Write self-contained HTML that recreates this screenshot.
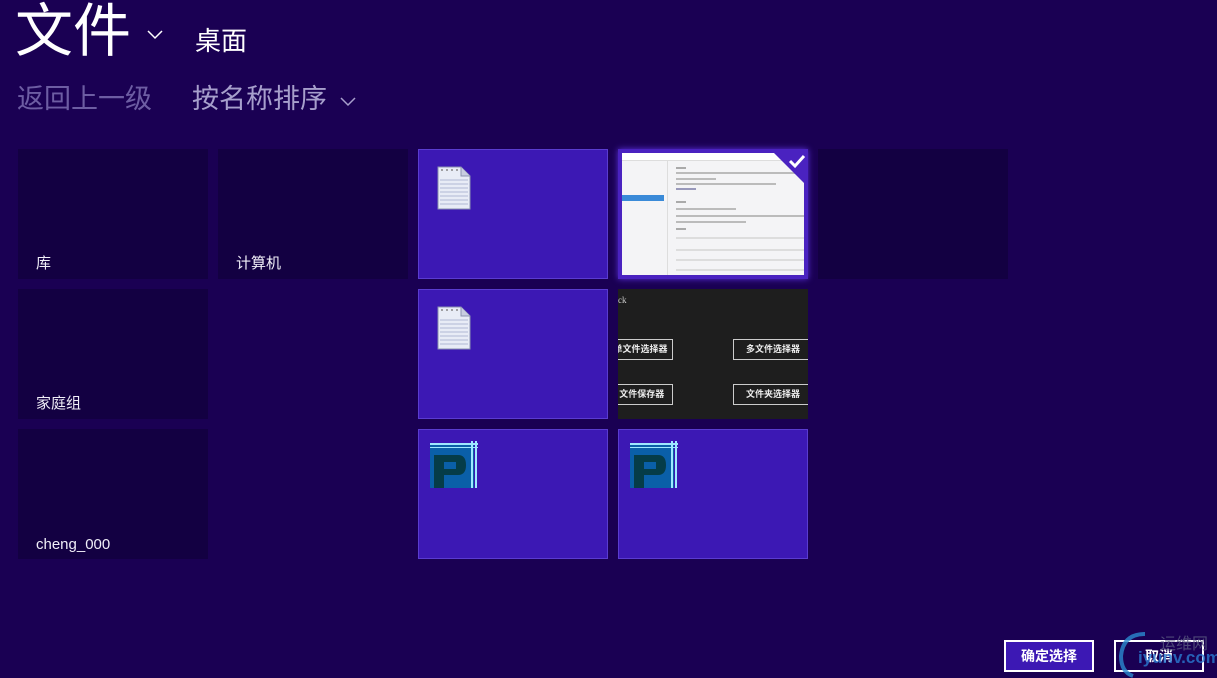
<!DOCTYPE html>
<html><head><meta charset="utf-8"><style>
*{margin:0;padding:0;box-sizing:border-box}
body{width:1217px;height:678px;background:#1a0053;position:relative;overflow:hidden;font-family:"Liberation Sans","Noto Sans CJK SC",sans-serif;color:#fff}
.a{position:absolute}
.t{position:absolute;width:190px;height:130px}
.d{background:#130042}
.p{background:#3c18b4;border:1px solid #5a3cd0}
.lbl{position:absolute;left:18px;bottom:6px;font-size:15px;color:#f0eef8}
.doc{position:absolute;left:18px;top:16px;width:34px;height:44px}
.pi{position:absolute;left:11px;top:11px;width:48px;height:47px}
.btn{position:absolute;border:1px solid #ccc;color:#eee;font-size:9px;font-weight:bold;text-align:center;line-height:19px;height:21px}
.ln{position:absolute;height:2px;background:#ddd;left:54px}
</style></head><body>
<div class="a" style="left:15px;top:-3px;font-size:58px;line-height:70px">文件</div>
<svg class="a" style="left:147px;top:29px" width="16" height="11"><path d="M1 2 L8 9 L15 2" stroke="#fff" stroke-width="1.5" fill="none"/></svg>
<div class="a" style="left:195px;top:25px;font-size:26px;line-height:32px">桌面</div>
<div class="a" style="left:17px;top:82px;font-size:27px;line-height:34px;color:#6d5da3">返回上一级</div>
<div class="a" style="left:192px;top:82px;font-size:27px;line-height:34px;color:#a79fcc">按名称排序</div>
<svg class="a" style="left:340px;top:96px" width="16" height="11"><path d="M1 2 L8 9 L15 2" stroke="#a79fcc" stroke-width="1.5" fill="none"/></svg>

<div class="t d" style="left:18px;top:149px"><div class="lbl">库</div></div>
<div class="t d" style="left:218px;top:149px"><div class="lbl">计算机</div></div>
<div class="t d" style="left:18px;top:289px"><div class="lbl">家庭组</div></div>
<div class="t d" style="left:18px;top:429px"><div class="lbl">cheng_000</div></div>
<div class="t d" style="left:818px;top:149px"></div>

<div class="t p" style="left:418px;top:149px"><svg class="doc" viewBox="0 0 34 44"><path d="M1 1 H24 L33 10 V43 H1 Z" fill="#e8ecf6" stroke="#8a92b0"/><path d="M24 1 V10 H33" fill="#c8cde0" stroke="#8a92b0"/><g stroke="#b0b8d4"><line x1="3" y1="14" x2="31" y2="14"/><line x1="3" y1="18" x2="31" y2="18"/><line x1="3" y1="22" x2="31" y2="22"/><line x1="3" y1="26" x2="31" y2="26"/><line x1="3" y1="30" x2="31" y2="30"/><line x1="3" y1="34" x2="31" y2="34"/><line x1="3" y1="38" x2="31" y2="38"/></g><g fill="#888"><circle cx="5" cy="4" r="1"/><circle cx="10" cy="4" r="1"/><circle cx="15" cy="4" r="1"/><circle cx="20" cy="4" r="1"/></g></svg></div>
<div class="t p" style="left:418px;top:289px"><svg class="doc" viewBox="0 0 34 44"><path d="M1 1 H24 L33 10 V43 H1 Z" fill="#e8ecf6" stroke="#8a92b0"/><path d="M24 1 V10 H33" fill="#c8cde0" stroke="#8a92b0"/><g stroke="#b0b8d4"><line x1="3" y1="14" x2="31" y2="14"/><line x1="3" y1="18" x2="31" y2="18"/><line x1="3" y1="22" x2="31" y2="22"/><line x1="3" y1="26" x2="31" y2="26"/><line x1="3" y1="30" x2="31" y2="30"/><line x1="3" y1="34" x2="31" y2="34"/><line x1="3" y1="38" x2="31" y2="38"/></g><g fill="#888"><circle cx="5" cy="4" r="1"/><circle cx="10" cy="4" r="1"/><circle cx="15" cy="4" r="1"/><circle cx="20" cy="4" r="1"/></g></svg></div>
<div class="t p" style="left:418px;top:429px"><svg class="pi" viewBox="0 0 48 47"><rect x="0" y="4" width="44" height="43" fill="#0a5fa8"/><path d="M4 14 H28 Q36 14 36 24 Q36 34 28 34 H14 V47 H4 Z M14 21 V28 H26 V21 Z" fill="#053c48"/><rect x="0" y="2" width="48" height="2" fill="#9ee8ff"/><rect x="0" y="6" width="48" height="1" fill="#9ee8ff"/><rect x="41" y="0" width="2" height="47" fill="#9ee8ff"/><rect x="45" y="0" width="2" height="47" fill="#9ee8ff"/></svg></div>
<div class="t p" style="left:618px;top:429px"><svg class="pi" viewBox="0 0 48 47"><rect x="0" y="4" width="44" height="43" fill="#0a5fa8"/><path d="M4 14 H28 Q36 14 36 24 Q36 34 28 34 H14 V47 H4 Z M14 21 V28 H26 V21 Z" fill="#053c48"/><rect x="0" y="2" width="48" height="2" fill="#9ee8ff"/><rect x="0" y="6" width="48" height="1" fill="#9ee8ff"/><rect x="41" y="0" width="2" height="47" fill="#9ee8ff"/><rect x="45" y="0" width="2" height="47" fill="#9ee8ff"/></svg></div>

<div class="t" style="left:618px;top:149px;background:#4a22c0;box-shadow:0 0 6px #5a30d8">
 <div class="a" style="left:4px;top:4px;width:182px;height:122px;background:#f4f4f6;overflow:hidden">
  <div class="a" style="left:0;top:0;width:182px;height:8px;background:#fff;border-bottom:1px solid #ddd"></div>
  <div class="a" style="left:0;top:42px;width:42px;height:6px;background:#3a8ad8"></div>
  <div class="a" style="left:45px;top:8px;width:1px;height:114px;background:#ddd"></div>
  <div class="ln" style="top:14px;width:10px;background:#aaa"></div>
  <div class="ln" style="top:19px;width:128px;background:#bbb"></div>
  <div class="ln" style="top:25px;width:40px;background:#bbb"></div>
  <div class="ln" style="top:30px;width:100px;background:#bbb"></div>
  <div class="ln" style="top:35px;width:20px;background:#99b"></div>
  <div class="ln" style="top:48px;width:10px;background:#aaa"></div>
  <div class="ln" style="top:55px;width:60px;background:#bbb"></div>
  <div class="ln" style="top:62px;width:128px;background:#bbb"></div>
  <div class="ln" style="top:68px;width:70px;background:#bbb"></div>
  <div class="ln" style="top:75px;width:10px;background:#aaa"></div>
  <div class="ln" style="top:84px;width:128px;background:#ddd"></div>
  <div class="ln" style="top:96px;width:128px;background:#ddd"></div>
  <div class="ln" style="top:106px;width:128px;background:#ddd"></div>
  <div class="ln" style="top:116px;width:128px;background:#ddd"></div>
 </div>
 <svg class="a" style="left:152px;top:0" width="38" height="38"><path d="M0 0 H38 V38 Z" fill="#4a22c0"/><path d="M20 12 L25 17 L34 7" stroke="#fff" stroke-width="3" fill="none"/></svg>
</div>

<div class="t" style="left:618px;top:289px;background:#1e1e1e;overflow:hidden">
 <div class="a" style="left:0;top:6px;font-size:9px;color:#ccc;font-family:'Liberation Serif',serif">ck</div>
 <div class="btn" style="left:-10px;top:50px;width:65px">单文件选择器</div>
 <div class="btn" style="left:115px;top:50px;width:80px">多文件选择器</div>
 <div class="btn" style="left:-10px;top:95px;width:65px">&nbsp;文件保存器</div>
 <div class="btn" style="left:115px;top:95px;width:80px">文件夹选择器</div>
</div>

<div class="a" style="left:1004px;top:640px;width:90px;height:32px;background:#3c18b4;border:2px solid #fff;font-size:14px;font-weight:bold;text-align:center;line-height:28px">确定选择</div>
<div class="a" style="left:1114px;top:640px;width:90px;height:32px;border:2px solid #fff;font-size:14px;font-weight:bold;text-align:center;line-height:28px">取消</div>
<svg class="a" style="left:1115px;top:630px" width="40" height="48"><path d="M30 4 Q8 4 6 26 Q6 42 18 46" stroke="#2a8ad0" stroke-width="4" fill="none" opacity=".8"/></svg>
<div class="a" style="left:1160px;top:630px;font-size:16px;color:#5a5a80;opacity:.8">运维网</div>
<div class="a" style="left:1138px;top:648px;font-size:17px;color:#2a7ad0;font-weight:bold;opacity:.8">iyunv.com</div>
</body></html>
